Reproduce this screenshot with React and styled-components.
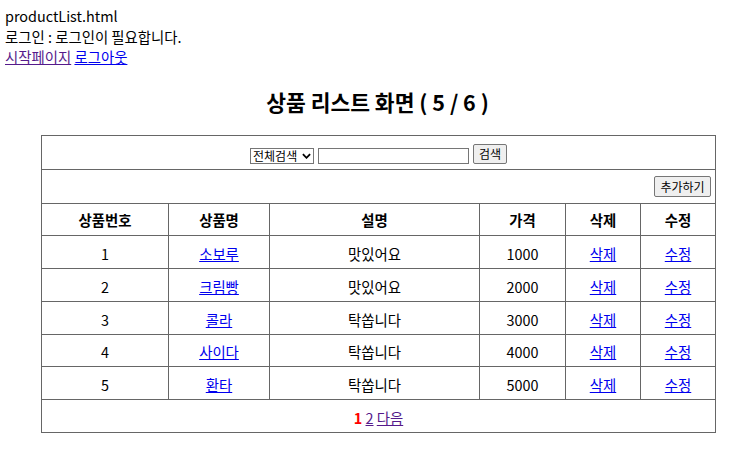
import React from 'react';
import styled, { createGlobalStyle } from 'styled-components';

const products = [
  { no: 1, name: '소보루', desc: '맛있어요', price: 1000 },
  { no: 2, name: '크림빵', desc: '맛있어요', price: 2000 },
  { no: 3, name: '콜라', desc: '탁쏩니다', price: 3000 },
  { no: 4, name: '사이다', desc: '탁쏩니다', price: 4000 },
  { no: 5, name: '환타', desc: '탁쏩니다', price: 5000 },
];

const rowHeights = [33, 33, 33, 32, 33];

const App = () => {
  return (
    <>
      <GlobalStyle />
      <Line>productList.html</Line>
      <Line>로그인 : 로그인이 필요합니다.</Line>
      <Line>
        <TextLink href="#" $visited>시작페이지</TextLink> <TextLink href="#">로그아웃</TextLink>
      </Line>

      <Title>상품 리스트 화면 ( 5 / 6 )</Title>

      <Table>
        <colgroup>
          <col style={{ width: 127 }} />
          <col style={{ width: 101 }} />
          <col style={{ width: 210 }} />
          <col style={{ width: 86 }} />
          <col style={{ width: 75 }} />
          <col style={{ width: 75 }} />
        </colgroup>
        <tbody>
          <Row $h={34}>
            <Cell colSpan={6}>
              <SearchBar>
                <SelectWrap>
                  <Select defaultValue="all">
                    <option value="all">전체검색</option>
                    <option value="name">상품명</option>
                    <option value="desc">설명</option>
                  </Select>
                  <Chevron viewBox="0 0 10 6" aria-hidden="true">
                    <path d="M1 1 L5 5 L9 1" fill="none" stroke="#000" strokeWidth="2" />
                  </Chevron>
                </SelectWrap>
                <SearchInput type="text" />
                <Button $w={34} $h={20}>검색</Button>
              </SearchBar>
            </Cell>
          </Row>
          <Row $h={34}>
            <Cell colSpan={6}>
              <Toolbar>
                <Button $w={57} $h={21}>추가하기</Button>
              </Toolbar>
            </Cell>
          </Row>
          <Row $h={32}>
            <HeadCell>상품번호</HeadCell>
            <HeadCell>상품명</HeadCell>
            <HeadCell>설명</HeadCell>
            <HeadCell>가격</HeadCell>
            <HeadCell>삭제</HeadCell>
            <HeadCell>수정</HeadCell>
          </Row>
          {products.map((p, i) => (
            <Row key={p.no} $h={rowHeights[i]}>
              <Cell $shift>{p.no}</Cell>
              <Cell $shift><TextLink href="#">{p.name}</TextLink></Cell>
              <Cell $shift>{p.desc}</Cell>
              <Cell $shift>{p.price}</Cell>
              <Cell $shift><TextLink href="#">삭제</TextLink></Cell>
              <Cell $shift><TextLink href="#">수정</TextLink></Cell>
            </Row>
          ))}
          <Row $h={33}>
            <Cell colSpan={6} $shift>
              <Current>1</Current> <TextLink href="#" $visited>2</TextLink>{' '}
              <TextLink href="#" $visited>다음</TextLink>
            </Cell>
          </Row>
        </tbody>
      </Table>
    </>
  );
};

const GlobalStyle = createGlobalStyle`
  body {
    margin: 6px 5px 5px;
    background: #fff;
    color: #000;
    font-family: "Noto Sans CJK KR", "Noto Sans", sans-serif;
    font-size: 14.4px;
  }
`;

const Line = styled.div`
  line-height: 20.6px;
`;

const TextLink = styled.a`
  color: ${props => (props.$visited ? '#551a8b' : '#0000ee')};
  text-decoration: underline;
`;

const Title = styled.h2`
  margin: 19px 0 18px;
  text-align: center;
  font-size: 21.5px;
  font-weight: 700;
  line-height: 30.4px;
`;

const Table = styled.table`
  width: 675px;
  margin: 0 0 0 36px;
  border-collapse: collapse;
  table-layout: fixed;
  border: 1px solid #666;
`;

const Row = styled.tr`
  height: ${props => props.$h}px;
`;

const Cell = styled.td`
  border: 1px solid #666;
  padding: ${props => (props.$shift ? '3px 4px 0' : '0 4px')};
  text-align: center;
  vertical-align: middle;
  line-height: 20px;
`;

const HeadCell = styled.th`
  border: 1px solid #666;
  padding: 1px 4px 0;
  text-align: center;
  vertical-align: middle;
  font-weight: 700;
  line-height: 20px;
`;

const SearchBar = styled.div`
  display: flex;
  justify-content: center;
  align-items: flex-end;
  gap: 4px;
  padding-top: 2px;
`;

const Toolbar = styled.div`
  display: flex;
  justify-content: flex-end;
`;

const SelectWrap = styled.span`
  position: relative;
  display: inline-flex;
`;

const Select = styled.select`
  appearance: none;
  -webkit-appearance: none;
  box-sizing: border-box;
  width: 64px;
  height: 16px;
  margin: 0;
  padding: 0 14px 0 2px;
  font-family: "Noto Sans CJK KR", sans-serif;
  font-size: 12px;
  line-height: 14px;
  border: 1px solid #767676;
  border-radius: 0;
  background: #fff;
  color: #000;
`;

const Chevron = styled.svg`
  position: absolute;
  right: 3px;
  top: 5px;
  width: 9px;
  height: 6px;
  pointer-events: none;
`;

const SearchInput = styled.input`
  box-sizing: border-box;
  width: 151px;
  height: 16px;
  margin: 0;
  padding: 0 2px;
  border: 1px solid #767676;
  font-size: 11px;
`;

const Button = styled.button`
  box-sizing: border-box;
  width: ${props => props.$w}px;
  height: ${props => props.$h}px;
  margin: 0;
  padding: 0;
  font-family: "Noto Sans CJK KR", sans-serif;
  font-size: 12px;
  color: #000;
  background: #efefef;
  border: 1px solid #767676;
  border-radius: 2px;
`;

const Current = styled.span`
  color: red;
  font-weight: 700;
`;

export default App;
